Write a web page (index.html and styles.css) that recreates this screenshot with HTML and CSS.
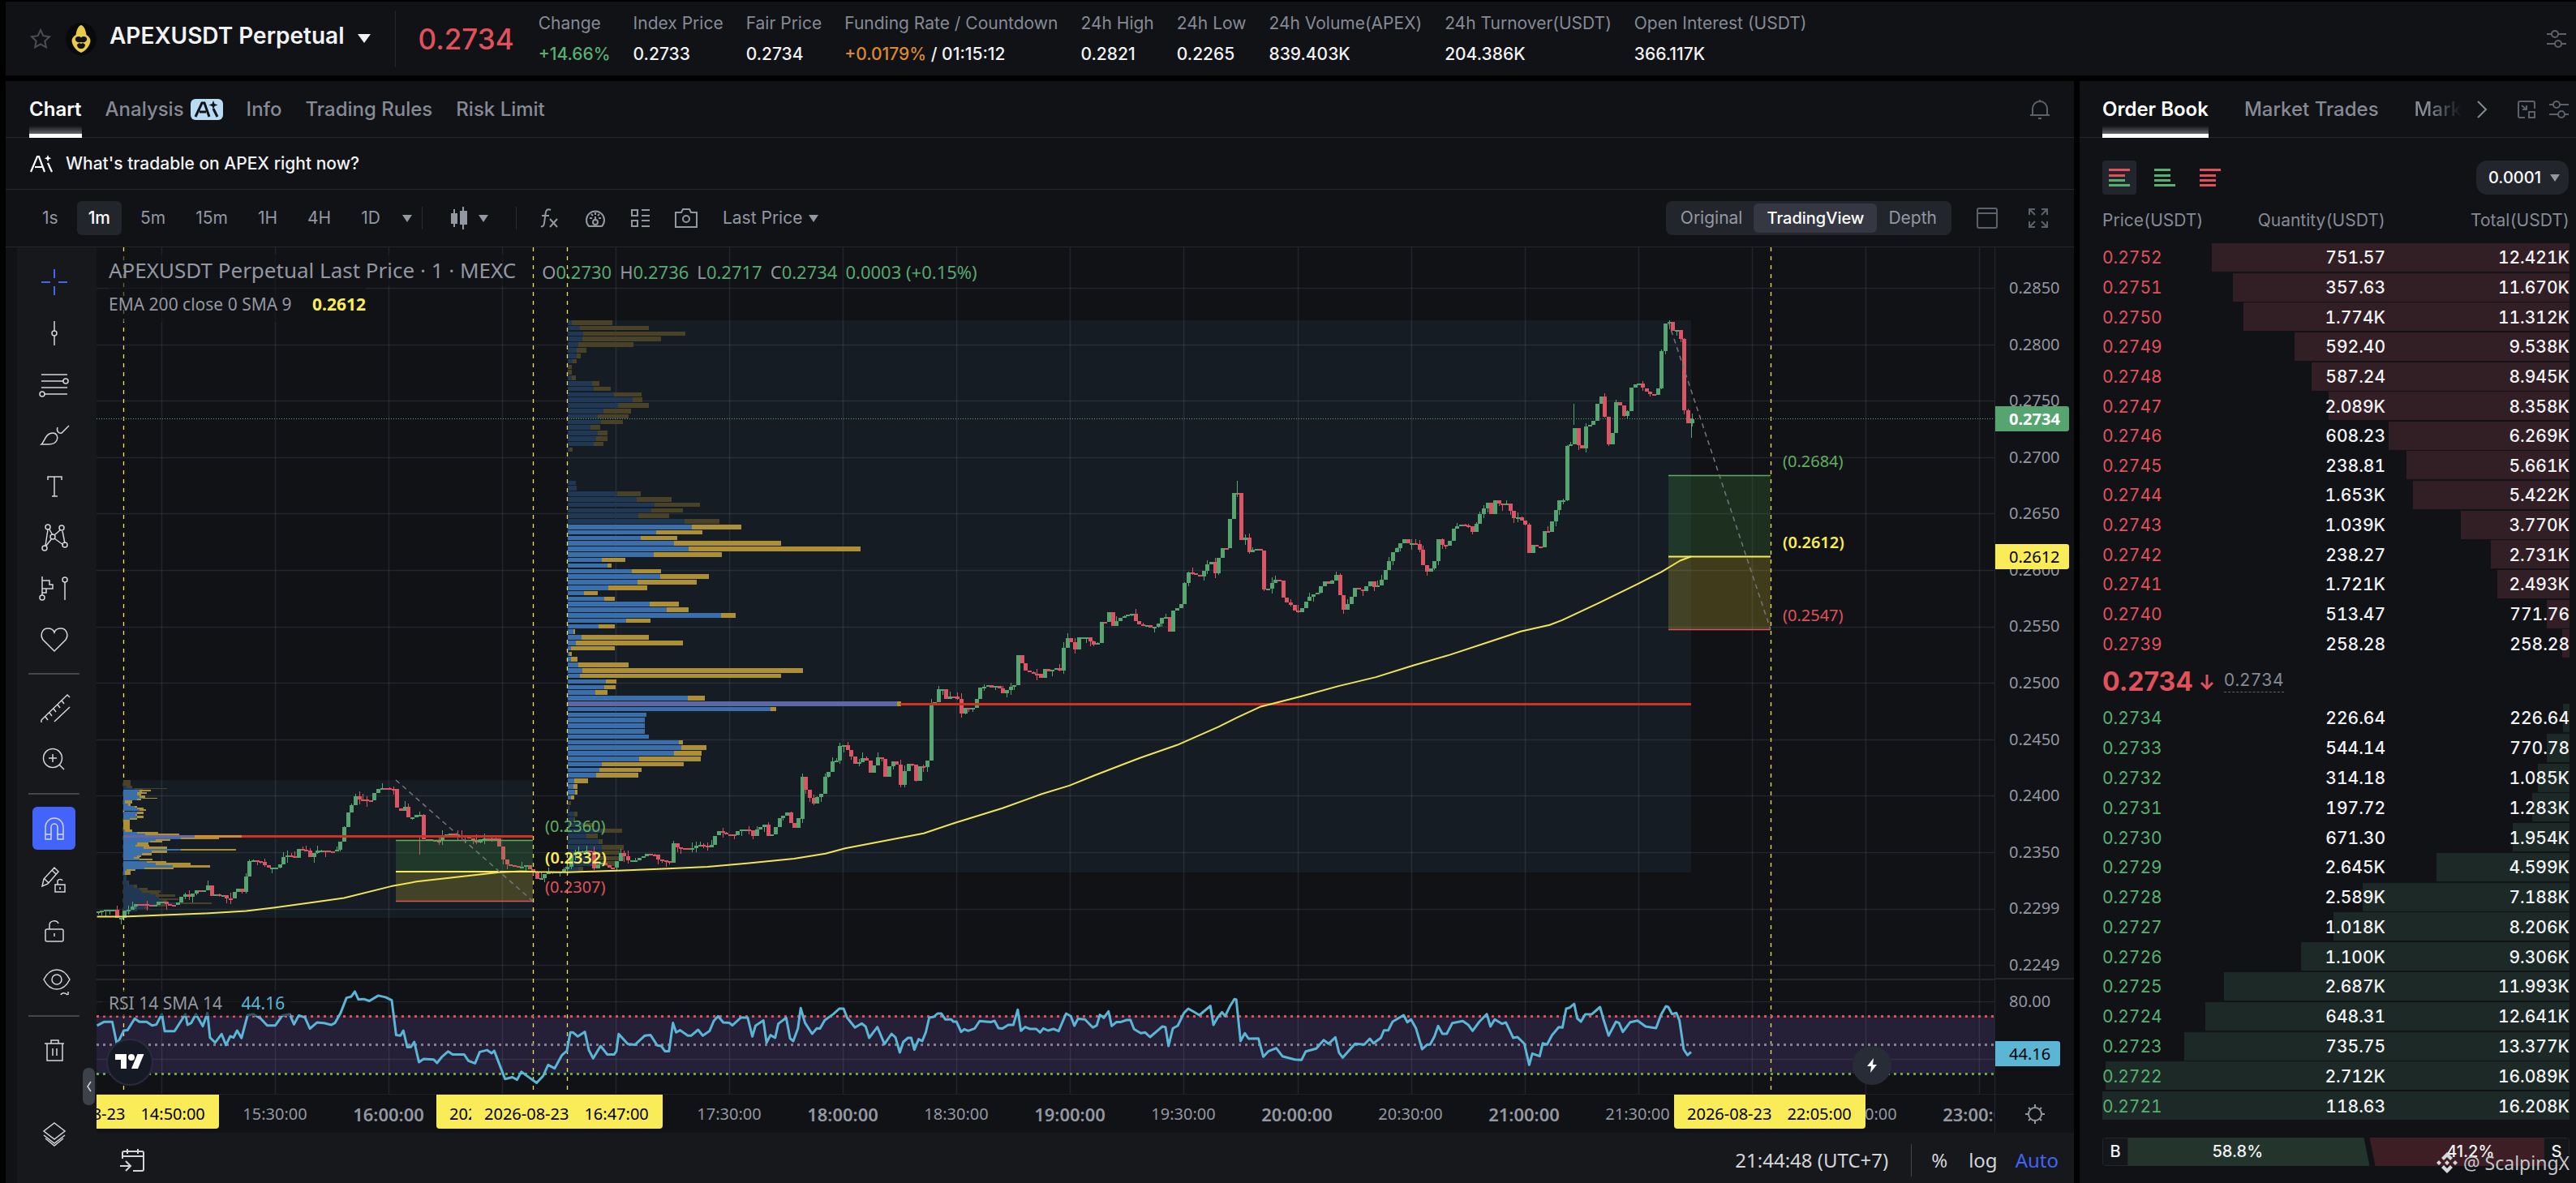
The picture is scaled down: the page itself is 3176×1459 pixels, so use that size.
FILE: index.html
```html
<!DOCTYPE html>
<html lang="en">
<head>
<meta charset="utf-8">
<title>APEXUSDT Perpetual</title>
<link rel="stylesheet" href="styles.css">
</head>
<body>
<header class="ticker">
  <button class="icon-btn star" aria-label="Favourite"><svg width="26" height="26" viewBox="0 0 26 26"><path d="M13 2l3.3 7.2 7.7 1-5.700 5.300 1.500 7.800L13 19.500l-6.800 3.800 1.500-7.800L2 10.200l7.700-1z"/></svg></button>
  <svg class="coin" width="38" height="42" viewBox="0 0 38 42"><ellipse cx="19" cy="21" rx="19" ry="20" fill="#08090b"/><path d="M19 4c4 1 5.500 6 6.500 12 3 2 5 4 5 7 0 6-6 13-11.500 15C13.500 36 7.500 29 7.500 23c0-3 2-5 5-7C13.500 10 15 5 19 4z" fill="#e8cb4a"/><path d="M12 20c2-2.500 5-2.500 7-.5 2-2 5-2 7 .5 1 4-3 6-7 5-4 1-8-1-7-5zM14 28c2-2 3.500-2 5-1 1.500-1 3-1 5 1 0 3-2 5-5 5s-5-2-5-5z" fill="#111216"/></svg>
  <h1>APEXUSDT Perpetual</h1>
  <span class="caret caret-lg"></span>
  <span class="ticker-rule"></span>
  <strong class="last">0.2734</strong>
  <dl class="stats">
    <div><dt>Change</dt><dd class="up">+14.66%</dd></div>
    <div><dt>Index Price</dt><dd>0.2733</dd></div>
    <div><dt>Fair Price</dt><dd>0.2734</dd></div>
    <div><dt>Funding Rate / Countdown</dt><dd><span class="warn">+0.0179%</span> / 01:15:12</dd></div>
    <div><dt>24h High</dt><dd>0.2821</dd></div>
    <div><dt>24h Low</dt><dd>0.2265</dd></div>
    <div><dt>24h Volume(APEX)</dt><dd>839.403K</dd></div>
    <div><dt>24h Turnover(USDT)</dt><dd>204.386K</dd></div>
    <div><dt>Open Interest (USDT)</dt><dd>366.117K</dd></div>
  </dl>
  <button class="icon-btn push" aria-label="Layout settings"><svg width="26" height="26" viewBox="0 0 26 26"><path d="M1 7h6M15 7h10M1 19h10M19 19h6"/><circle cx="11" cy="7" r="4"/><circle cx="15" cy="19" r="4"/></svg></button>
</header>

<main>
<section class="chart-panel">
  <nav class="tabs">
    <a href="#chart" class="on">Chart</a>
    <a href="#analysis">Analysis <svg class="ai-badge" width="40" height="26" viewBox="0 0 40 26"><rect width="40" height="26" rx="6" fill="#b9dcf3"/><path d="M6 22l8-17h3l6 17M11 16h8M28 12l5 10" fill="none" stroke="#101318" stroke-width="3"/><path d="M28 2l1.500 4 4 1.500-4 1.500-1.500 4-1.500-4-4-1.500 4-1.500z" fill="#101318"/></svg></a>
    <a href="#info">Info</a>
    <a href="#rules">Trading Rules</a>
    <a href="#risk">Risk Limit</a>
    <button class="icon-btn push" aria-label="Alerts"><svg width="26" height="28" viewBox="0 0 26 28"><path d="M4 21V13a9 9 0 0 1 18 0v8M1 21h24M11 25h4M13 4V2"/></svg></button>
  </nav>
  <a class="ask" href="#ask"><svg width="30" height="22" viewBox="0 0 30 22"><path d="M1 21L9 2h2l7 19M6 15h9M22 10l5 11" fill="none" stroke="#fff" stroke-width="2.200"/><path d="M22 0l1.200 3 3 1.200-3 1.200-1.200 3-1.200-3-3-1.200 3-1.200z" fill="#fff"/></svg>What's tradable on APEX right now?</a>
  <div class="toolbar">
    <div class="frames">
      <button>1s</button><button class="on">1m</button><button>5m</button><button>15m</button><button>1H</button><button>4H</button><button>1D</button>
    </div>
    <button class="bare" aria-label="More intervals"><span class="caret"></span></button>
    <span class="rule"></span>
    <button class="bare kind" aria-label="Candle type"><svg width="20" height="28" viewBox="0 0 20 28"><path d="M4 3v22M15 0v28" stroke="#9397a1" stroke-width="2"/><path d="M0 8h8v13H0zM11 5h9v17h-9z" fill="#9397a1"/></svg><span class="caret"></span></button>
    <span class="rule"></span>
    <div class="tools">
      <button class="icon-btn" aria-label="Indicators"><svg width="32" height="28" viewBox="0 0 32 28"><path d="M17 4c-4-2-6 0-6.500 5L9 20c-.5 4-2 5-4 4M6 11h9M16 15l9 10M25 15l-9 10"/></svg></button>
      <button class="icon-btn" aria-label="Gauge"><svg width="32" height="28" viewBox="0 0 32 28"><path d="M8 24a11 11 0 1 1 16 0zM16 7v3M9 14h3M20 14h3M11 9l2 2M21 9l-2 2M16 12v5"/><circle cx="16" cy="19" r="3"/></svg></button>
      <button class="icon-btn" aria-label="Chart list"><svg width="32" height="28" viewBox="0 0 32 28"><path d="M5 4h7v7H5zM5 17h7v7H5zM17 4h10M17 11h10M17 17h10M17 24h10"/></svg></button>
      <button class="icon-btn" aria-label="Snapshot"><svg width="32" height="28" viewBox="0 0 32 28"><path d="M3 7h7l2-4h8l2 4h7v18H3z"/><circle cx="16" cy="15" r="4"/></svg></button>
    </div>
    <button class="bare price-kind">Last Price <span class="caret"></span></button>
    <div class="views push"><button>Original</button><button class="on">TradingView</button><button>Depth</button></div>
    <button class="icon-btn dim-icon" aria-label="Panel"><svg width="28" height="28" viewBox="0 0 28 28"><rect x="2" y="2" width="24" height="24" rx="2"/><path d="M2 8h24"/></svg></button>
    <button class="icon-btn dim-icon full" aria-label="Full screen"><svg width="26" height="26" viewBox="0 0 26 26"><path d="M2 9V2h7M2 2l7 7M17 2h7v7M24 2l-7 7M2 17v7h7M2 24l7-7M24 17v7h-7M24 24l-7-7"/></svg></button>
  </div>

  <div class="workspace">
    <aside class="draw">
      <button aria-label="Cross"><svg viewBox="0 0 56 56"><path stroke="#3f68ee" stroke-width="2" d="M28 12v11M28 33v11M12 28h11M33 28h11"/></svg></button>
      <button aria-label="Line"><svg viewBox="0 0 56 56"><path d="M28 13v12M28 31v12"/><circle cx="28" cy="28" r="3"/></svg></button>
      <button aria-label="Fib"><svg viewBox="0 0 56 56"><path d="M12 16h32M12 24h27M12 32h32M16 40h28"/><circle cx="42" cy="24" r="3"/><circle cx="13" cy="40" r="3"/></svg></button>
      <button aria-label="Brush"><svg viewBox="0 0 56 56"><path d="M12 39c4-3 5-14 14-14 5 0 7 5 5 9-2 4-6 5-10 5zM32 18c-2 5 2 8 5 7l9-9"/></svg></button>
      <button aria-label="Text"><svg viewBox="0 0 56 56"><path d="M20 20v-4h17v4M28 16v24M25 40h7"/></svg></button>
      <button aria-label="Pattern"><svg viewBox="0 0 56 56"><path d="M17 38l3-20M22 18l4 7M28 25l8-7M38 20l3 15M28 29l11 8M18 38l7-9"/><circle cx="20" cy="15" r="3"/><circle cx="37" cy="16" r="3"/><circle cx="26" cy="27" r="3"/><circle cx="16" cy="41" r="3"/><circle cx="41" cy="37" r="3"/></svg></button>
      <button aria-label="Forecast"><svg viewBox="0 0 56 56"><path d="M13 13v23M13 18h9v5h4v5H13M18 28v5h-5M41 20v22"/><circle cx="13" cy="39" r="3"/><circle cx="41" cy="17" r="3"/></svg></button>
      <button aria-label="Icons"><svg viewBox="0 0 56 56"><path d="M28 42L14 28c-4-6-1-14 6-14 4 0 7 2 8 5 1-3 4-5 8-5 7 0 10 8 6 14z"/></svg></button>
      <hr>
      <button aria-label="Measure"><svg viewBox="0 0 56 56"><path d="M12 42l32-31 3 3M12 42v3M17 38l3 4M22 33l3 4M27 28l3 4M32 23l3 4M37 18l3 4M28 44l19-18"/></svg></button>
      <button aria-label="Zoom"><svg viewBox="0 0 56 56"><circle cx="26" cy="26" r="11.500"/><path d="M34 34l6 6M26 21v10M21 26h10"/></svg></button>
      <hr>
      <button class="lit" aria-label="Magnet"><svg viewBox="0 0 56 56"><path d="M17 41V26a11 11 0 0 1 22 0v15h-7V26a4 4 0 0 0-8 0v15zM17 35h7M32 35h7"/></svg></button>
      <button aria-label="Lock drawing"><svg viewBox="0 0 56 56"><path d="M13 36l2-9 13-14 5 5-13 15zM16 27l5 5M25 16l5 5M29 34h12v9H29zM32 34v-4c0-3 5-3 6-1M35 37v3"/></svg></button>
      <button aria-label="Lock all"><svg viewBox="0 0 56 56"><rect x="17" y="26" width="22" height="15" rx="2"/><path d="M22 26v-5c0-6 9-7 11-2M28 31v4"/></svg></button>
      <button aria-label="Hide"><svg viewBox="0 0 56 56"><path d="M15 25c8-16 24-16 32 0-8 16-24 16-32 0zM36 44c1-3 6-3 8 0M45 44v-4"/><circle cx="31" cy="25" r="6"/></svg></button>
      <hr>
      <button aria-label="Delete"><svg viewBox="0 0 56 56"><path d="M16 19h24M24 19v-4h9v4M19 19v21h19V19M26 25v9M31 25v9"/></svg></button>
      <button class="bottom" aria-label="Layers"><svg viewBox="0 0 56 56"><path d="M28 14l13 10-13 10-13-10zM15 29l13 10 13-10M17 33l11 9 11-9"/></svg></button>
      <button class="handle" aria-label="Collapse"><svg width="8" height="16" viewBox="0 0 8 16"><path d="M6 2L2 8l4 6"/></svg></button>
    </aside>

    <div class="chart">
      <div class="plot-row">
        <div class="plot">
          <svg id="plot" viewBox="119 305 2340 1044" preserveAspectRatio="none"></svg>
          <div class="legend">
            <div class="legend-row"><span class="legend-title">APEXUSDT Perpetual Last Price · 1 · MEXC</span><span class="ohlc"><span>O<b>0.2730</b></span><span>H<b>0.2736</b></span><span>L<b>0.2717</b></span><span>C<b>0.2734</b></span><span><b>0.0003 (+0.15%)</b></span></span></div>
            <div class="legend-study">EMA 200 close 0 SMA 9 <b>0.2612</b></div>
          </div>
          <div class="legend-rsi">RSI 14 SMA 14 <b>44.16</b></div>
          <span class="mark green a1">(0.2360)</span>
          <span class="mark yellow a2">(0.2332)</span>
          <span class="mark red a3">(0.2307)</span>
          <span class="mark green b1">(0.2684)</span>
          <span class="mark yellow b2">(0.2612)</span>
          <span class="mark red b3">(0.2547)</span>
          <a class="tv" href="#tv" aria-label="TradingView"><svg width="38" height="28" viewBox="0 0 36 28"><path d="M14 22H7V11H0V4h14v18zM28 22h-8l7.500-18h8L28 22z" fill="#fff"/><circle cx="20" cy="8" r="4" fill="#fff"/></svg></a>
          <button class="flash" aria-label="Quick trade"><svg width="20" height="24" viewBox="0 0 20 24"><path d="M12 3L4 13h5l-1 8 8-10h-5z" fill="#fff"/></svg></button>
        </div>
        <div class="axis">
          <div class="axis-main"><span>0.2850</span><span>0.2800</span><span>0.2750</span><span>0.2700</span><span>0.2650</span><span>0.2600</span><span>0.2550</span><span>0.2500</span><span>0.2450</span><span>0.2400</span><span>0.2350</span><span>0.2299</span><span>0.2249</span></div>
          <div class="axis-rsi"><span>80.00</span></div>
          <b class="tag tag-last">0.2734</b>
          <span class="tag tag-ema">0.2612</span>
          <span class="tag tag-rsi">44.16</span>
        </div>
      </div>
      <div class="time-row">
        <div class="times">
          <span></span><span>15:30:00</span><b>16:00:00</b><span></span><span></span><span>17:30:00</span><b>18:00:00</b><span>18:30:00</span><b>19:00:00</b><span>19:30:00</span><b>20:00:00</b><span>20:30:00</span><b>21:00:00</b><span>21:30:00</span><span></span><span>22:30:00</span><b>23:00:00</b>
          <div class="stamp s1"><span>2026-08-23</span><span>14:50:00</span></div>
          <div class="stamp s2"><span>2026-08-23</span></div>
          <div class="stamp s3"><span>2026-08-23</span><span>16:47:00</span></div>
          <div class="stamp s4"><span>2026-08-23</span><span>22:05:00</span></div>
        </div>
        <button class="gear" aria-label="Axis settings"><svg width="28" height="28" viewBox="0 0 28 28"><circle cx="14" cy="14" r="8"/><path d="M14 6V2M14 26v-4M6 14H2M26 14h-4M8.300 8.300L6 6M22 22l-2.300-2.300M8.300 19.700L6 22M22 6l-2.300 2.300"/></svg></button>
      </div>
      <footer class="chart-foot">
        <button class="goto" aria-label="Go to date"><svg width="32" height="30" viewBox="0 0 32 30"><path d="M4 13V6c0-1 1-2 2-2h22c1 0 2 1 2 2v20c0 1-1 2-2 2H17M4 10h26M10 1v6M23 1v6M1 22h12M8 16l6 6-6 6"/></svg></button>
        <button class="clock push">21:44:48 (UTC+7)</button>
        <span class="foot-rule"></span>
        <button>%</button><button>log</button><button class="auto">Auto</button>
      </footer>
    </div>
  </div>
</section>

<section class="book">
  <nav class="tabs">
    <a href="#book" class="on">Order Book</a>
    <a href="#trades">Market Trades</a>
    <a href="#mark" class="fade">Mark</a>
    <span class="push book-icons">
      <svg class="chev" width="16" height="22" viewBox="0 0 16 22"><path d="M3 1l10 10L3 21"/></svg>
      <svg width="22" height="22" viewBox="0 0 22 22"><path d="M9 21H3c-1 0-2-1-2-2V3c0-1 1-2 2-2h16c1 0 2 1 2 2v7M5 6l6 5M11 6v5H6M14 14h7v7h-7z"/></svg>
      <svg width="26" height="24" viewBox="0 0 26 24"><path d="M1 6h5M14 6h11M1 18h11M20 18h5"/><circle cx="10" cy="6" r="4"/><circle cx="16" cy="18" r="4"/></svg>
    </span>
  </nav>
  <div class="modes">
    <button class="on" aria-label="Both sides"><svg width="26" height="24" viewBox="0 0 26 24"><path d="M0 1h26v3H0zM0 8h20v3H0z" fill="#e0515c"/><path d="M0 14h20v3H0zM0 20h26v3H0z" fill="#57b072"/></svg></button>
    <button aria-label="Bids"><svg width="26" height="24" viewBox="0 0 26 24"><path d="M0 1h20v3H0zM0 8h20v3H0zM0 14h20v3H0zM0 20h26v3H0z" fill="#57b072"/></svg></button>
    <button aria-label="Asks"><svg width="26" height="24" viewBox="0 0 26 24"><path d="M0 1h26v3H0zM0 8h20v3H0zM0 14h20v3H0zM0 20h20v3H0z" fill="#e0515c"/></svg></button>
    <label class="step push"><select aria-label="Price step"><option>0.0001</option></select><span class="caret"></span></label>
  </div>
  <table class="levels asks">
    <thead><tr><th>Price(USDT)</th><th>Quantity(USDT)</th><th>Total(USDT)</th></tr></thead>
    <tbody id="asks"></tbody>
  </table>
  <div class="mid"><strong>0.2734</strong><svg width="18" height="22" viewBox="0 0 18 22"><path d="M9 2v17M2 12l7 7 7-7"/></svg><span>0.2734</span></div>
  <table class="levels bids"><tbody id="bids"></tbody></table>
  <div class="ratio">
    <b>B</b><span class="buy">58.8%</span><span class="sell">41.2%</span><b>S</b>
  </div>
  <div class="credit"><svg width="28" height="28" viewBox="0 0 28 28"><path d="M14 1l7 7-3 3-4-4-4 4-3-3zM4 11l3 3-3 3-3-3zM24 11l3 3-3 3-3-3zM14 11l3 3-3 3-3-3zM10 17l4 4 4-4 3 3-7 7-7-7z" fill="#d5d7da"/></svg>@ ScalpingX</div>
</section>
</main>
<script src="chart.js"></script>
</body>
</html>
```
FILE: styles.css
```css
* { box-sizing: border-box; }
body {
  margin: 0;
  min-height: 100vh;
  padding: 2px 0 0 7px;
  display: flex;
  flex-direction: column;
  gap: 7px;
  background: #000;
  color: #f2f3f5;
  font: 21px/28px Inter, "Noto Sans", sans-serif;
  overflow-x: hidden;
}
h1, dl, dd { margin: 0; }
a { color: inherit; text-decoration: none; }
button {
  margin: 0;
  padding: 0;
  border: 0;
  background: none;
  color: inherit;
  font: inherit;
}
svg { display: block; }
.push { margin-left: auto; }
.icon-btn svg, .draw svg, .gear svg, .goto svg, .book-icons svg, .mid svg {
  fill: none;
  stroke: #9397a1;
  stroke-width: 2;
}
.caret {
  display: inline-block;
  border: 6px solid transparent;
  border-top: 9px solid #9397a1;
  border-bottom: 0;
}
.caret-lg { border-width: 11px 8px 0; border-top-color: #f2f3f5; }

/* Ticker */
.ticker {
  display: flex;
  align-items: center;
  height: 91px;
  padding: 0 11px 0 30px;
  background: #111216;
}
.star { margin-right: 18px; }
.ticker .star svg { stroke: #4b4e57; }
.ticker .push svg { stroke: #5d616b; }
h1 { margin: 0 16px 8px; font-size: 28px; line-height: 36px; font-weight: 600; }
.ticker-rule { width: 1px; height: 70px; margin: 0 28px 0 30px; background: #24262c; }
.last { font-size: 35px; line-height: 44px; font-weight: 500; color: #e0515c; }
.stats { display: flex; gap: 28px; margin-left: 30px; }
.stats div { display: flex; flex-direction: column; gap: 10px; }
.stats dt { color: #858a95; white-space: nowrap; }
.stats dd { font-weight: 500; }
.up { color: #57b072; }
.warn { color: #dd8a2c; }

/* Panels */
main { flex: 1; display: flex; gap: 7px; }
.chart-panel, .book { background: #111216; display: flex; flex-direction: column; }
.chart-panel { flex: 1; min-width: 0; }
.book { width: 612px; position: relative; }
.tabs {
  display: flex;
  align-items: center;
  gap: 29px;
  height: 70px;
  padding: 0 29px;
  border-bottom: 1px solid #24262c;
  font-size: 24px;
  font-weight: 500;
  color: #858a95;
}
.tabs a {
  display: flex;
  align-items: center;
  gap: 8px;
  height: 70px;
  border-bottom: 5px solid transparent;
  border-top: 5px solid transparent;
  white-space: nowrap;
}
.tabs .on {
  color: #fff;
  font-weight: 600;
  border-bottom-color: #fff;
  background: linear-gradient(to top, rgba(255,255,255,.35), transparent) no-repeat bottom / 100% 10px;
}
.ask {
  display: flex;
  align-items: center;
  gap: 14px;
  height: 64px;
  padding-left: 30px;
  border-bottom: 1px solid #24262c;
  font-weight: 500;
}
.toolbar {
  display: flex;
  align-items: center;
  height: 71px;
  padding: 0 31px;
  border-bottom: 1px solid #24262c;
  color: #9397a1;
}
.frames { display: flex; gap: 9px; }
.frames button { height: 42px; padding: 0 14px; border-radius: 6px; }
.frames .on { background: #23252d; color: #fff; font-weight: 500; }
.bare { display: flex; align-items: center; gap: 8px; margin-left: 13px; }
.rule { width: 1px; height: 28px; margin-left: 12px; background: #2a2c33; }
.kind { margin-left: 35px; gap: 14px; }
.kind + .rule { margin-left: 34px; }
.tools { display: flex; gap: 24px; margin-left: 25px; }
.price-kind { margin-left: 29px; }
.views { display: flex; padding: 3px 4px; height: 42px; border-radius: 8px; background: #23252d; }
.views button { padding: 0 14px; border-radius: 6px; }
.views .on { padding: 0 16px; background: #353842; color: #fff; font-weight: 500; font-size: 20px; }
.dim-icon { margin-left: 30px; }
.dim-icon.full { margin-left: 36px; }
.icon-btn.dim-icon svg, .tabs .icon-btn svg { stroke: #5d616b; }

/* Workspace */
.workspace { flex: 1; display: flex; padding-left: 14px; }
.draw {
  position: relative;
  width: 98px;
  padding-top: 11px;
  padding-bottom: 29px;
  display: flex;
  flex-direction: column;
  align-items: center;
  background: #17181c;
}
.draw button { width: 56px; height: 63px; display: flex; align-items: center; justify-content: center; margin-right: 7px; }
.draw svg { width: 56px; height: 56px; flex: none; stroke: #d3d5da; stroke-width: 1.500; }
.draw hr { width: 63px; height: 2px; margin: 10px 7px 10px 0; border: 0; background: #43454b; }
.draw .lit { width: 53px; height: 53px; margin-top: 5px; margin-bottom: 5px; border-radius: 6px; background: #4264fb; }
.draw .bottom { margin-top: auto; }
.draw .handle {
  position: absolute;
  right: 2px;
  bottom: 96px;
  width: 15px;
  height: 46px;
  margin: 0;
  border-radius: 7px;
  background: #3d4149;
}
.draw .handle svg { width: 8px; height: 16px; }
.chart {
  flex: 1;
  min-width: 0;
  display: flex;
  flex-direction: column;
  font-family: "Noto Sans", "Open Sans", sans-serif;
  font-size: 20px;
  color: #9397a1;
}
.plot-row { flex: 1; display: flex; }
.plot { position: relative; flex: 1; min-width: 0; }
#plot { position: absolute; inset: 0; width: 100%; height: 100%; }
.legend, .legend-rsi { position: absolute; left: 8px; padding: 0 7px; }
.legend { top: 8px; }
.legend-row { display: flex; align-items: center; gap: 32px; height: 40px; }
.legend-title, .legend-study, .legend-rsi { background: rgba(17,18,22,.6); }
.legend-title { font-size: 26px; line-height: 40px; white-space: nowrap; }
.ohlc { display: flex; gap: 10px; padding-top: 4px; font-size: 22px; white-space: nowrap; }
.ohlc b { font-weight: 400; color: #57a873; }
.legend-study { display: inline-block; font-size: 21px; line-height: 44px; }
.legend-study b { margin-left: 20px; color: #faec58; }
.legend-rsi { top: 916px; line-height: 32px; font-size: 21px; }
.legend-rsi b { margin-left: 18px; font-weight: 400; color: #5bb6d6; }
.mark { position: absolute; line-height: 28px; }
.green { color: #5eae60; }
.yellow { color: #faec58; font-weight: 600; }
.red { color: #e0515c; }
.a1, .a2, .a3 { left: 553px; }
.b1, .b2, .b3 { left: 2079px; }
.a1 { top: 700px; }
.a2 { top: 739px; }
.a3 { top: 775px; }
.b1 { top: 250px; }
.b2 { top: 350px; }
.b3 { top: 440px; }
.tv {
  position: absolute;
  left: 12px;
  bottom: 10px;
  width: 58px;
  height: 58px;
  border: 2px solid #2b2b3c;
  border-radius: 50%;
  display: grid;
  place-items: center;
  background: #151a24;
}
.flash {
  position: absolute;
  right: 127px;
  bottom: 11px;
  width: 48px;
  height: 48px;
  border-radius: 50%;
  display: grid;
  place-items: center;
  background: #282c36;
}
.axis { position: relative; width: 98px; border-left: 1px solid #24262c; display: flex; flex-direction: column; }
.axis span { padding-left: 17px; }
.axis-main { flex: 1; display: flex; flex-direction: column; justify-content: space-between; padding: 36px 0 2px; border-bottom: 2px solid #24262c; }
.axis-rsi { height: 141px; padding-top: 13px; }
.tag { position: absolute; left: 0; width: 91px; padding-left: 17px; line-height: 31px; border-radius: 0 3px 3px 0; color: #000; }
.tag-last { top: 196px; background: #56a571; color: #fff; }
.tag-ema { top: 366px; background: #faec58; }
.tag-rsi { bottom: 34px; width: 80px; background: #5bb6d6; }
.time-row { display: flex; height: 48px; border-top: 1px solid #1f2126; }
.times { position: relative; flex: 1; min-width: 0; display: flex; padding-left: 10px; overflow: hidden; }
.times > span, .times > b { flex: none; width: 140px; text-align: center; line-height: 48px; }
.times > b { font-size: 22px; font-weight: 600; }
.stamp {
  position: absolute;
  top: 0;
  display: flex;
  gap: 19px;
  width: 236px;
  height: 42px;
  padding-left: 16px;
  line-height: 48px;
  border-radius: 0 0 4px 4px;
  background: #faec58;
  color: #000;
  white-space: nowrap;
}
.s1 { left: -85px; }
.s2 { left: 419px; }
.s3 { left: 462px; }
.s4 { left: 1945px; }
.gear { width: 98px; border-left: 1px solid #24262c; display: grid; place-items: center; }
.chart-foot {
  display: flex;
  align-items: center;
  gap: 26px;
  height: 62px;
  padding: 6px 19px 0 28px;
  background: #17181c;
  color: #d3d5da;
  font-size: 24px;
}
.goto svg { stroke: #d3d5da; }
.foot-rule { width: 1px; height: 40px; margin: 0 -2px 0 2px; background: #43454b; }
.auto { color: #4264fb; margin-left: -4px; }

/* Order book */
.book .tabs { gap: 0; padding: 0 8px 0 28px; }
.book .tabs a + a { margin-left: 44px; }
.fade { -webkit-mask-image: linear-gradient(to right, #000 30%, transparent); mask-image: linear-gradient(to right, #000 30%, transparent); }
.book-icons { display: flex; align-items: center; gap: 16px; }
.book-icons svg { stroke: #5d616b; }
.book-icons .chev { margin-right: 20px; stroke: #858a95; }
.modes { display: flex; align-items: center; gap: 14px; padding: 28px 9px 0 28px; }
.modes button { width: 42px; height: 42px; border-radius: 4px; display: grid; place-items: center; }
.modes .on { background: #23252d; }
.step {
  display: flex;
  align-items: center;
  width: 114px;
  height: 42px;
  padding-left: 15px;
  border-radius: 14px;
  background: #23252d;
}
.step select { appearance: none; width: 76px; padding: 0; border: 0; background: none; color: #fff; font: 500 20px/28px Inter, sans-serif; }
.levels {
  width: 576px;
  margin-left: 28px;
  border-collapse: collapse;
  font-variant-numeric: tabular-nums;
  table-layout: fixed;
}
.levels th { height: 60px; padding: 4px 0 0; font-weight: 400; color: #858a95; text-align: right; }
.levels td { padding: 0; text-align: right; font-weight: 500; line-height: 28px; }
.levels th:first-child, .levels td:first-child { text-align: left; font-weight: 400; width: 170px; }
.levels th:nth-child(2), .levels td:nth-child(2) { width: 179px; }
.asks { height: 573px; }
.bids { height: 515px; }
.levels tbody tr { background: linear-gradient(to left, var(--bar) var(--depth), transparent 0) no-repeat 0 0 / 100% 35px; }
.asks tr { --bar: #321f25; }
.bids tr { --bar: #1c2926; }
.asks td:first-child { color: #e0515c; }
.bids td:first-child { color: #57b072; }
.mid { display: flex; align-items: center; height: 55px; padding-left: 28px; color: #858a95; }
.mid strong { font-size: 32px; line-height: 40px; color: #e0515c; }
.mid svg { margin: 0 12px 0 8px; stroke: #e0515c; stroke-width: 3; }
.mid span { border-bottom: 1px dashed #5d616b; margin-bottom: 2px; font-variant-numeric: tabular-nums; }
.ratio {
  display: flex;
  height: 35px;
  margin: 20px 8px 0 28px;
  border-radius: 4px;
  overflow: hidden;
  line-height: 35px;
  font-weight: 500;
  font-size: 20px;
  text-align: center;
}
.ratio b { width: 32px; font-weight: 500; background: #15161a; border: 1px solid #24262c; line-height: 33px; }
.buy { flex: 306; background: #23342c; clip-path: polygon(0 0, calc(100% - 7px) 0, 100% 100%, 0 100%); padding-right: 28px; }
.sell { flex: 205; background: #3c1e24; clip-path: polygon(0 0, 100% 0, 100% 100%, 7px 100%); padding-left: 34px; }
.credit {
  position: absolute;
  right: 8px;
  bottom: 9px;
  display: flex;
  align-items: center;
  gap: 6px;
  font: 23px/32px "Noto Sans", sans-serif;
  color: #c4c6ca;
}
```
FILE: chart.js
```js
// Converts a run of [x, y] pairs stored on its own grid to chart coordinates.
function run(ox, oy, sx, sy, flat) {
  const out = [];
  for (let i = 0; i < flat.length; i += 2) out.push([ox + flat[i] * sx, oy + flat[i + 1] * sy]);
  return out;
}
const A = f => run(0, 850, 0.4464, 0.3884, f);
const B = f => run(630, 960, 0.4847, 0.3333, f);
const C = f => run(680, 370, 0.4464, 0.408, f);
const D = f => run(1380, 370, 0.5102, 0.408, f);
const E = f => run(1380, 1180, 0.7589, 0.3333, f);

const price = [].concat(
  A([268,708,278,703,300,700,315,700,322,726,335,726,341,704,352,703,362,695,372,681,390,682,412,686,432,684,444,668,455,683,488,684,498,662,512,650,518,662,528,655,540,638,560,648,572,616,586,660,600,648,608,660,620,650,632,674,645,648,655,630,668,646,678,600,686,546,700,543,722,548,738,566,770,566,780,535,800,524,812,544,824,508,845,511,858,535,870,514,890,511,925,516,936,500,947,462,957,394,968,385,978,336,995,351,1025,352,1040,316,1060,314,1090,318,1098,384,1112,388,1120,367,1130,414,1148,400,1160,398,1164,475,1190,478,1212,482,1222,465,1240,456,1262,462,1285,468,1305,478,1320,490,1330,472,1375,474,1385,530,1398,556,1440,566,1450,555,1462,570,1475,580,1482,602,1500,598,1510,577,1525,580,1548,578]),
  B([145,325,152,288,165,272,190,268,203,270,210,335,222,318,232,310,245,328,265,330,275,272,285,282,298,303,318,303,330,292,345,280,365,282,375,300,390,304,405,312,412,236,422,256,440,258,455,262,470,250,485,246,500,256,512,244,520,210,530,195,545,206,570,210,580,190,605,188,615,214,628,185,645,170,655,214,670,200,680,150,695,135,705,125,715,178,725,186,733,140]),
  C([690,1430,703,1480,715,1508,725,1522,738,1494,748,1492,752,1445,765,1430,775,1394,790,1390,797,1348,812,1346,822,1370,832,1385,842,1408,860,1384,872,1394,880,1430,890,1410,900,1382,912,1384,922,1443,932,1412,945,1392,955,1406,962,1478,972,1430,985,1402,1000,1404,1008,1464,1018,1402,1030,1414,1042,1382,1046,1222,1060,1216,1068,1176,1085,1175,1090,1206,1105,1194,1125,1208,1132,1250,1145,1228,1155,1240,1170,1225,1180,1172,1205,1165,1215,1172,1232,1162,1240,1184,1250,1190,1262,1172,1280,1164,1285,1072,1298,1074,1302,1148,1310,1120,1325,1128,1345,1130,1352,1142,1362,1116,1375,1124,1390,1110,1405,1120,1412,1060,1422,1020,1435,1034,1447,1060,1455,1020,1480,1020,1495,1042,1512,1034,1518,972,1535,975,1540,942,1550,985,1565,965]),
  D([5,960,18,950,35,948,40,975,55,984,70,982,80,994,95,976,105,958,118,958,122,1006,130,940,145,928,155,905,158,855,168,822,195,836,210,808,220,782,232,828,240,780,252,742,262,755,268,662,276,582,290,582,298,792,305,714,315,768,325,750,345,760,352,912,360,870,375,845,390,850,398,914,412,912,418,936,435,946,450,912,462,893,480,884,490,858,500,845,508,862,525,830,535,905,542,936,555,912,570,870,590,880,605,848,615,868,630,858,645,810,660,765,675,742,690,722,700,738,712,732,722,745,732,772,737,828,755,810,765,782,770,720,785,748,798,730,808,690,825,678,845,684,855,705,868,655,880,632,890,612,900,650,908,606,925,622,940,612,950,660,965,655,985,684,992,780,1000,740,1018,748,1028,694,1040,704,1048,655,1065,602,1078,606,1082,442,1095,435,1102,374,1110,440,1118,455,1128,382,1145,372,1155,316,1165,290,1175,362,1182,440,1192,402,1200,308,1215,322,1222,366,1232,322,1238,262,1255,250,1268,270,1280,282,1300,290,1308,190,1318,72,1330,66,1340,97,1350,90,1358,122,1364,322,1373,374,1385,360])
);
const ema = [].concat(
  A([268,722,341,722,450,717,565,712,680,704,760,693,850,679,950,663,1080,626,1150,611,1250,598,1380,581,1440,578,1480,580]),
  B([142,347,270,341,400,334,500,327,600,314,720,297,800,278,850,259,950,231,1050,203,1130,164,1250,110,1350,58]),
  C([1430,1468,1500,1437]),
  D([0,1408,50,1384,140,1345,240,1290,285,1262,340,1230,440,1198,530,1167,620,1140,710,1105,800,1072,890,1035,970,1002,1040,982,1070,968,1160,915,1250,860,1310,822,1355,788,1382,775])
);
const rsi = [].concat(
  A([268,1068,288,1056,310,1056,323,1128,342,1084,352,1083,372,1046,385,1056,405,1056,420,1068,432,1065,447,1032,455,1086,482,1086,512,1032,518,1066,528,1060,541,1032,560,1070,573,1028,580,1106,594,1122,612,1095,624,1130,636,1102,645,1106,655,1084,667,1108,684,1035,700,1032,720,1046,738,1068,760,1068,780,1036,800,1032,812,1064,825,1036,842,1042,856,1078,876,1058,895,1060,915,1066,925,1060,940,1030,957,980,970,976,980,960,990,985,1005,984,1020,990,1045,973,1065,978,1082,988,1094,1098,1106,1100,1114,1084,1125,1137,1135,1136,1144,1120,1157,1184,1170,1174,1198,1176,1207,1187,1220,1168,1238,1150,1250,1160,1282,1160,1294,1180,1312,1188,1325,1152,1345,1146,1358,1156,1365,1148,1395,1238,1415,1232,1428,1240,1440,1215,1482,1250,1500,1228,1514,1193,1532,1204,1552,1162,1562,1152]),
  B([142,1010,151,940,158,940,170,955,188,938,198,1005,209,1036,228,990,245,1022,262,1022,268,1010,274,946,297,983,315,986,340,952,355,950,372,988,382,990,392,1010,402,1010,412,905,420,940,430,932,450,952,458,952,476,930,488,952,505,935,516,897,527,880,540,903,556,905,563,914,585,885,602,885,614,955,622,915,642,896,650,978,660,950,672,960,680,908,700,886,710,962,718,972,730,925,737,850,748,905,766,945,778,925,786,926,798,895,820,872,835,852,846,852,855,885,875,922,892,907,902,918,911,960,932,920,950,983,968,945,978,958,989,1014,998,975,1010,960,1018,960,1026,1004,1037,965,1046,972,1055,940,1064,885,1076,882,1085,870,1095,870,1105,892,1120,892,1125,900,1133,900,1145,938,1153,928,1163,934,1180,925,1192,898,1220,902,1230,897,1240,924,1250,926,1265,912,1278,912,1289,856,1297,934,1308,920,1320,927,1336,927,1346,940,1354,925,1366,933,1380,927,1393,935,1412,870,1424,880,1433,915,1442,890,1460,892,1480,922,1490,914,1498,875,1508,886,1520,862,1528,916,1540,902,1550,902,1566,894]),
  E([18,233,24,268,35,283,42,280,50,297,70,258,75,260,80,330,87,265,95,255,105,208,112,192,122,205,130,216,148,182,153,252,160,224,167,205,172,220,180,182,187,157,190,158,197,312,204,283,210,303,226,302,234,370,242,350,255,338,265,368,285,380,296,382,303,350,320,340,332,308,340,322,351,298,357,355,363,373,383,322,398,325,407,303,413,320,425,300,430,272,437,272,444,240,462,216,468,242,474,232,482,265,492,342,500,325,505,325,512,295,518,256,525,285,532,285,541,245,558,238,567,252,574,274,585,240,597,212,603,258,610,232,622,248,628,243,640,300,647,297,658,322,666,400,671,358,683,368,688,320,695,325,703,290,714,260,720,262,726,192,732,188,739,174,744,228,750,240,757,213,768,212,781,186,787,235,795,292,807,240,812,245,818,278,830,242,842,236,855,258,872,264,880,215,888,183,892,186,898,212,905,208,910,235,917,343,923,364,929,352])
);

// Volume profile rows: [y, up end, total end] and [up end, total end].
const smallProfile = [
  [292,341,362],[306,341,362],[310,350,365],[316,372,461],[319,372,395],[322,385,418],[326,385,392],[330,378,405],[335,380,390],[340,385,402],[347,395,434],[351,380,390],[355,345,365],[365,355,362],[372,372,380],[378,378,396],[384,385,404],[390,378,398],[398,375,378],[404,378,396],[412,358,380],[416,341,358],[440,341,358],[448,345,365],[455,380,437],[461,402,495],[468,541,665],[473,500,606],[478,430,470],[484,415,448],[490,380,410],[496,375,412],[502,398,462],[510,500,652],[516,420,462],[522,392,420],[530,380,390],[536,370,385],[541,385,422],[547,405,460],[554,430,528],[562,478,581],[568,400,480],[574,350,375],[580,345,362],
  [592,350,350],[610,355,357],[622,370,378],[632,385,408],[640,392,443],[648,415,440],[655,430,485],[662,438,440],[667,440,493],[672,450,462],[680,500,584],[686,425,460],[692,400,410],[700,378,380],[708,355,358],[716,345,348],[724,341,343]];
const bigProfile = [[56,168],[78,269],[87,370],[85,302],[74,226],[69,96],[69,81],[58,69],[44,56],[44,56],[56,67],[112,132],[116,164],[172,249],[224,251],[184,269],[143,220],[128,213],[137,197],[108,134],[128,155],[123,155],[116,143],[49,58],0,0,0,0,0,[67,67],[69,69],[181,246],[235,332],[284,410],[276,363],[240,325],[367,464],
  [388,524],[289,417],[246,347],[338,634],[379,853],[282,470],[139,204],[155,166],[222,302],[300,435],[237,401],[157,264],[90,128],[146,175],[271,352],[318,379],[468,508],[206,273],[130,175],[60,65],[83,269],[67,363],[54,175],[49,56],[54,72],[74,213],[85,694],[78,634],[150,179],[146,177],[121,155],[376,423],[955,965],[605,620],[262,262],[258,258],[258,258],[258,258],[269,269],[352,363],[358,428],[338,414],[242,412],[139,365],[132,249],[123,240],[63,101],[60,72],[65,72],[54,63],
  [44,54],[49,49],[62,72],[60,65],[91,120],[136,195],[96,128],[131,141],[138,199],[140,188],[131,199],[140,183],[74,87]];

const BLUE = '#3b6fac', GOLD = '#ad8f35', BLUE_DIM = '#203854', GOLD_DIM = '#494226';
const parts = [];
const rect = (x, y, w, h, fill, extra = '') => { if (w > 0) parts.push(`<rect x="${x.toFixed(1)}" y="${y.toFixed(1)}" width="${w.toFixed(1)}" height="${h.toFixed(1)}" fill="${fill}" ${extra}/>`); };
const line = (x1, y1, x2, y2, stroke, w, dash = '') => parts.push(`<line x1="${x1}" y1="${y1}" x2="${x2}" y2="${y2}" stroke="${stroke}" stroke-width="${w}" ${dash && `stroke-dasharray="${dash}"`}/>`);
const poly = (pts, stroke, w) => parts.push(`<polyline points="${pts.map(p => p[0].toFixed(1) + ',' + p[1].toFixed(1)).join(' ')}" fill="none" stroke="${stroke}" stroke-width="${w}" stroke-linejoin="round"/>`);

const L = 119, R = 2459;
rect(152, 962, 505, 170, '#151c23');
rect(699, 395, 1386, 681, '#151c23');
rect(L, 1253, R - L, 71, '#251f37');
for (let i = 0; i < 13; i++) line(L, 355.5 + Math.round(69.6 * i), R, 355.5 + Math.round(69.6 * i), 'rgba(160,170,190,.13)', 1.5);
line(L, 1235.5, R, 1235.5, 'rgba(160,170,190,.13)', 1.5);
line(L, 1306.5, R, 1306.5, 'rgba(160,170,190,.13)', 1.5);
for (let i = 0; i < 17; i++) line(Math.round(199 + 140.05 * i) + .5, 305, Math.round(199 + 140.05 * i) + .5, 1349, 'rgba(160,170,190,.13)', 1.5);
line(L, 1208, R, 1208, '#24262c', 2);

for (const x of [152.5, 657.5, 699.5, 2183.5]) line(x, 305, x, 1349, '#f2e459', 1.3, '5 6');

// Volume profiles
parts.push('<g shape-rendering="crispEdges">');
smallProfile.forEach((r, i) => {
  const y = 850 + r[0] * .3884;
  const next = i + 1 < smallProfile.length ? 850 + smallProfile[i + 1][0] * .3884 : y + 2;
  const dim = r[0] < 320 || r[0] > 584;
  rect(152, y - 1, (r[1] - 341) * .4464, next - y, dim ? BLUE_DIM : BLUE);
  rect(152 + (r[1] - 341) * .4464, y - 1, (r[2] - r[1]) * .4464, next - y, dim ? GOLD_DIM : GOLD);
});
bigProfile.forEach((r, i) => {
  if (!r) return;
  const y = 395 + i * 6.81, dim = i < 37 || i > 86;
  rect(699.5, y, (r[0] - 44) * .4464, 5.6, i === 69 ? '#5b68a5' : dim ? BLUE_DIM : BLUE);
  rect(699.5 + (r[0] - 44) * .4464, y, (r[1] - r[0]) * .4464, 5.6, dim ? GOLD_DIM : GOLD);
});
parts.push('</g>');
line(152, 1031.5, 240, 1031.5, '#6a66a2', 3);
line(240, 1031.5, 298, 1031.5, '#d9892c', 3);

// One candle a minute, each opening at the previous close.
const step = 4.668;
let seed = 7, k = 0;
const rnd = () => (seed = (seed * 16807) % 2147483647) / 2147483647;
const at = x => {
  while (k < price.length - 2 && price[k + 1][0] < x) k++;
  const [x0, y0] = price[k], [x1, y1] = price[k + 1];
  return y0 + (y1 - y0) * Math.min(1, Math.max(0, (x - x0) / (x1 - x0)));
};
let open = price[0][1];
parts.push('<g shape-rendering="crispEdges">');
for (let x = 121; x < 2089; x += step) {
  const close = at(x), up = close < open || (close === open && rnd() > .5), c = up ? '#56a571' : '#dc5564';
  const top = Math.min(open, close), h = Math.max(2, Math.abs(close - open));
  const a = rnd() > .6 ? rnd() * 7 : 0, b = rnd() > .6 ? rnd() * 7 : 0;
  rect(x - .5, Math.max(top - a, 395), 1, h + a + b, c);
  rect(x - 2.5, top, 5, h, c);
  open = close;
}
rect(2085, 516, 1, 24, '#56a571');
rect(1525, 593, 1, 20, '#56a571');
rect(1940, 498, 1, 26, '#56a571');
rect(517, 1030, 1, 24, '#dc5564');
parts.push('</g>');

line(298, 1031.5, 657, 1031.5, '#d5301f', 3);
line(1110, 868.5, 2085, 868.5, '#d5301f', 3);
poly(ema, '#f2e459', 2);

// Forecast zones
function zone(x1, x2, top, mid, bottom, dimTop) {
  rect(x1, top, x2 - x1, mid - top, 'rgba(76,160,70,.21)');
  rect(x1, mid, x2 - x1, bottom - mid, 'rgba(250,225,50,.2)');
  line(x1, top, x2, top, '#5eae60', 1.5);
  line(x1, mid, x2, mid, '#faec58', 2);
  line(x1, bottom, x2, bottom, '#e0515c', 1.5);
  line(x1, dimTop, x2, bottom, '#74767d', 1.5, '6 5');
}
zone(488, 657, 1036.5, 1075, 1111.5, 962);
zone(2057, 2183, 586.5, 686.5, 776.5, 397);

line(L, 516.5, R, 516.5, '#5aa77a', 1, '1 2');
line(L, 1253.5, R, 1253.5, '#e0515c', 3, '3 5');
line(L, 1288.5, R, 1288.5, '#82828f', 3, '3 5');
line(L, 1324.5, R, 1324.5, '#5eae50', 3, '3 5');
poly(rsi, '#5bb6d6', 3);
document.getElementById('plot').innerHTML = parts.join('');

// Order book
const asks = [['0.2752','751.57','12.421K'],['0.2751','357.63','11.670K'],['0.2750','1.774K','11.312K'],['0.2749','592.40','9.538K'],['0.2748','587.24','8.945K'],['0.2747','2.089K','8.358K'],['0.2746','608.23','6.269K'],['0.2745','238.81','5.661K'],['0.2744','1.653K','5.422K'],['0.2743','1.039K','3.770K'],['0.2742','238.27','2.731K'],['0.2741','1.721K','2.493K'],['0.2740','513.47','771.76'],['0.2739','258.28','258.28']];
const bids = [['0.2734','226.64','226.64'],['0.2733','544.14','770.78'],['0.2732','314.18','1.085K'],['0.2731','197.72','1.283K'],['0.2730','671.30','1.954K'],['0.2729','2.645K','4.599K'],['0.2728','2.589K','7.188K'],['0.2727','1.018K','8.206K'],['0.2726','1.100K','9.306K'],['0.2725','2.687K','11.993K'],['0.2724','648.31','12.641K'],['0.2723','735.75','13.377K'],['0.2722','2.712K','16.089K'],['0.2721','118.63','16.208K']];
const depth = t => (parseFloat(t) * (t.endsWith('K') ? 1000 : 1) / 162.08).toFixed(1);
const rows = list => list.map(r => `<tr style="--depth:${depth(r[2])}%"><td>${r[0]}</td><td>${r[1]}</td><td>${r[2]}</td></tr>`).join('');
document.getElementById('asks').innerHTML = rows(asks);
document.getElementById('bids').innerHTML = rows(bids);
```
